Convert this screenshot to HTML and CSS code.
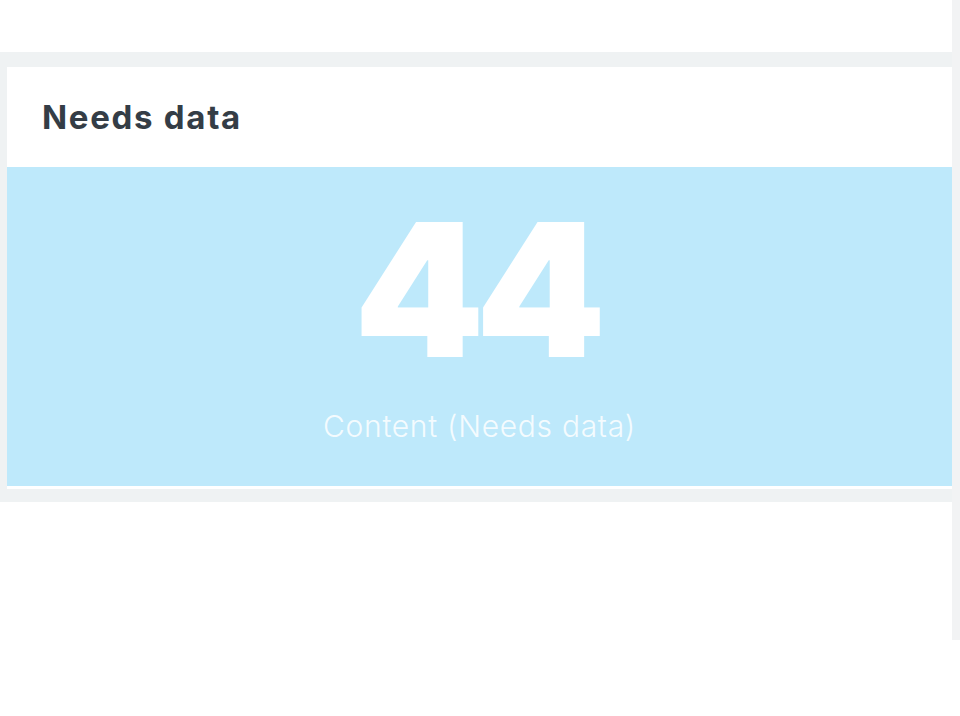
FILE: index.html
```html
<!DOCTYPE html>
<html>
<head>
<meta charset="utf-8">
<link rel="stylesheet" href="styles.css">
</head>
<body>
<div class="page">
  <div class="main">
    <div class="top"></div>
    <div class="band">
      <div class="card">
        <div class="card-head"><h2 class="title">Needs data</h2></div>
        <div class="panel">
          <div class="value">44</div>
          <div class="label">Content (Needs data)</div>
        </div>
      </div>
    </div>
  </div>
  <div class="rail"></div>
</div>
</body>
</html>
```
FILE: styles.css
```css
html, body {
  margin: 0;
  padding: 0;
  background: #ffffff;
}
body {
  font-family: "Inter", "Open Sans", sans-serif;
}
.page {
  display: flex;
  align-items: flex-start;
  width: 960px;
}
.main {
  flex: 1;
}
.rail {
  width: 8px;
  height: 640px;
  background: #f2f3f4;
}
.top {
  height: 52px;
}
.band {
  background: #eff2f3;
  padding: 15px 0 13px 7px;
}
.card {
  background: #ffffff;
  padding-bottom: 3px;
}
.card-head {
  height: 100px;
  display: flex;
  align-items: center;
  padding-left: 35px;
}
.title {
  margin: 0;
  font-size: 33px;
  font-weight: 700;
  letter-spacing: 1.7px;
  color: #343d46;
}
.panel {
  height: 319px;
  background: #bee9fb;
  display: flex;
  flex-direction: column;
  align-items: center;
  box-sizing: border-box;
  padding-top: 30px;
}
.value {
  font-size: 186px;
  font-weight: 900;
  line-height: 1;
  letter-spacing: -9px;
  margin-right: 8px;
  color: #ffffff;
}
.label {
  margin-top: 25px;
  font-size: 30px;
  font-weight: 300;
  letter-spacing: 0.7px;
  color: rgba(255, 255, 255, 0.85);
}
```
